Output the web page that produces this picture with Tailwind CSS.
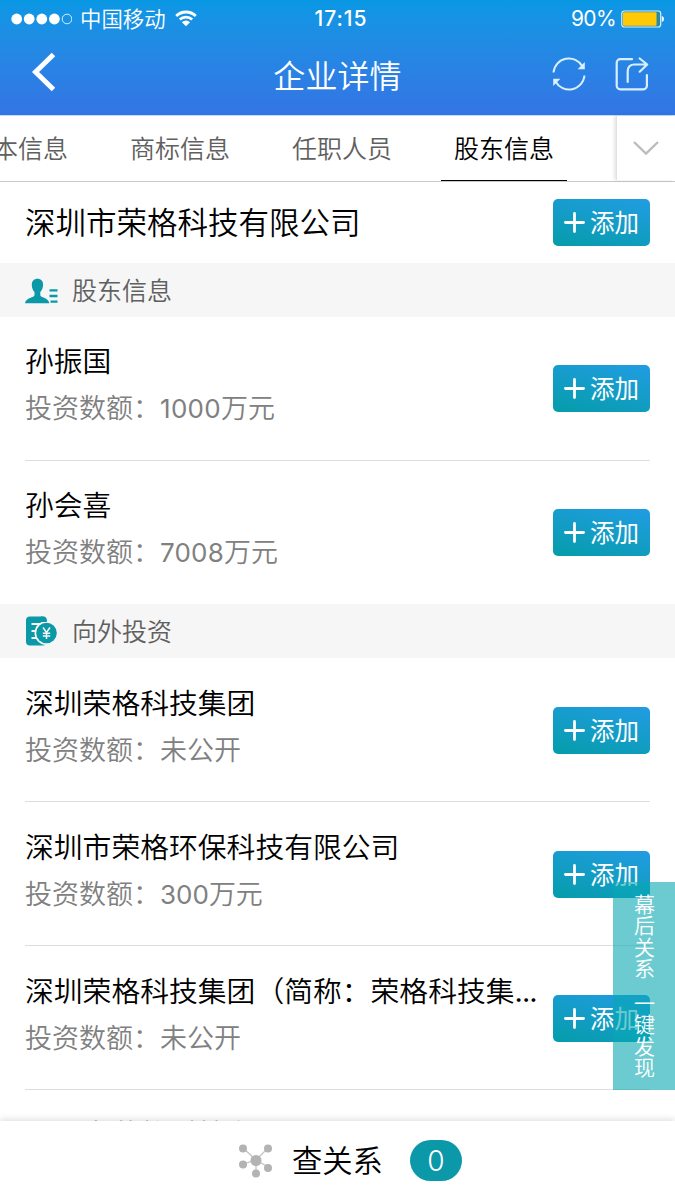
<!DOCTYPE html>
<html lang="zh-CN">
<head>
<meta charset="utf-8">
<title>企业详情</title>
<script src="https://cdn.jsdelivr.net/npm/@tailwindcss/browser@4"></script>
</head>
<body class="bg-white">
<svg class="hidden">
  <symbol id="plus" viewBox="0 0 22 22"><path d="M11 1.500v19M1.500 11h19" stroke="#fff" stroke-width="2.900" stroke-linecap="round"/></symbol>
</svg>
<div class="relative flex h-[1200px] w-[675px] flex-col overflow-hidden bg-white font-['Inter','Noto_Sans_CJK_SC',sans-serif] font-[350] text-black">

  <header class="h-[116px] shrink-0 border-b border-[#b8e2ff] bg-linear-to-b from-[#0898e4] to-[#3374e4] text-white">
    <div class="grid h-[38px] grid-cols-3 items-center pl-[11px] pr-[11px] text-[21px] leading-[38px]">
      <div class="flex items-center">
        <svg class="mr-[8px]" width="61" height="12" viewBox="0 0 61 12"><g fill="#fff"><circle cx="5.700" cy="6" r="5.400"/><circle cx="18.200" cy="6" r="5.400"/><circle cx="30.800" cy="6" r="5.400"/><circle cx="43.400" cy="6" r="5.400"/></g><circle cx="56" cy="6" r="4.800" fill="none" stroke="#d5f0ff"/></svg>
        <span class="text-[21.4px]">中国移动</span>
        <svg class="mb-[2px] ml-[9px]" width="22" height="17" viewBox="0 0 22 17"><path d="M1.200 6A14 14 0 0 1 20.800 6M4.800 9.600a9 9 0 0 1 12.400 0" fill="none" stroke="#fff" stroke-width="2.800"/><path d="M11 16.200 6.900 12.200a5.800 5.800 0 0 1 8.200 0z" fill="#fff"/></svg>
      </div>
      <div class="pl-[7px] text-center text-[21px] font-medium tracking-[1px]">17:15</div>
      <div class="flex items-center justify-end">
        <span class="mr-[5px] text-[21px] font-normal tracking-[-0.6px]">90%</span>
        <svg width="43" height="18" viewBox="0 0 43 18"><rect x=".8" y="1" width="38.900" height="16" rx="2.500" fill="#2b8ba6" stroke="#d5f2ff" stroke-width="1.200"/><rect x="2" y="2.200" width="33.500" height="13.600" rx="1" fill="#ffc907"/><path d="M40.800 6q2.200.6 2.200 3t-2.200 3z" fill="#fff"/></svg>
      </div>
    </div>
    <div class="grid h-[77px] grid-cols-[1fr_auto_1fr] items-center pl-[31px] pr-[26px]">
      <svg class="mb-[9px]" width="26" height="40" viewBox="0 0 26 40"><path d="M22.500 2.500 4.500 20 22.500 37.500" fill="none" stroke="#fff" stroke-width="5"/></svg>
      <h1 class="mr-[5px] text-[32px] leading-[77px] tracking-[0.1px]">企业详情</h1>
      <div class="mb-[5px] flex items-center justify-end gap-[29px] text-[#d8efff]">
        <svg width="34" height="34" viewBox="0 0 34 34" fill="none" stroke="currentColor" stroke-width="2"><path d="M1.500 15.500A15.500 15.500 0 0 1 30.500 9.500M32.500 18.500A15.500 15.500 0 0 1 3.500 24.500"/><path d="M32.800 5v7.200h-7.200zM1.200 29v-7.200h7.200z" fill="currentColor" stroke="none"/></svg>
        <svg width="34" height="34" viewBox="0 0 34 34" fill="none" stroke="currentColor" stroke-width="2.200" stroke-linecap="round" stroke-linejoin="round"><path d="M17 2.200H5.200a3.500 3.500 0 0 0-3.500 3.500v23.100a3.500 3.500 0 0 0 3.500 3.500h23.200a3.500 3.500 0 0 0 3.500-3.500V18"/><path d="M12.700 25V14.500q0-7 7-7H32M24.700 1.500l7.500 6-7.500 7.200"/></svg>
      </div>
    </div>
  </header>

  <nav class="flex h-[66px] shrink-0 border-b border-[#c8c8c8] text-[25px] leading-[66px] text-[#606060]">
    <div class="flex w-[616px] shrink-0 justify-end overflow-visible whitespace-nowrap">
      <span class="mr-[62px]">基本信息</span>
      <span class="mr-[62px]">商标信息</span>
      <span class="mr-[49px]">任职人员</span>
      <span class="mr-[49px] h-[65px] shrink-0 border-b border-black px-[13px] text-black">股东信息</span>
    </div>
    <div class="flex h-[64px] flex-1 items-center justify-center border-l border-[#e2e2e2] shadow-[-2px_0_3px_rgba(0,0,0,0.10)]">
      <svg width="28" height="16" viewBox="0 0 28 16"><path d="M2 2l12 11.500L26 2" fill="none" stroke="#bcbcbc" stroke-width="2.400"/></svg>
    </div>
  </nav>

  <main class="min-h-0 flex-1 overflow-hidden">
    <div class="flex h-[81px] items-center justify-between px-[25px]">
      <h2 class="text-[30.5px] leading-[80px]">深圳市荣格科技有限公司</h2>
      <button class="flex h-[47px] w-[97px] items-center justify-center gap-[5px] rounded-[5px] bg-linear-15 from-[#059ca9] to-[#219ce3] text-[24.5px] font-normal text-white"><svg width="21" height="21"><use href="#plus"/></svg><span class="pt-[2px]">添加</span></button>
    </div>

    <div class="flex h-[54px] items-center bg-[#f6f6f7] pl-[25px] text-[25px] text-[#606060]">
      <svg class="mt-[2px] mr-[14px]" width="33" height="26" viewBox="0 0 33 26" fill="#0b98a7"><path d="M12.500.8c3.700 0 5.600 2.400 5.600 6 0 3.400-1.400 5.700-2.800 7.200v3.200c0 2.400 8.200 2.300 9 8H0c.8-5.700 9.500-5.600 9.500-8V14C8 12.500 6.800 10.200 6.800 6.800c0-3.600 2-6 5.700-6z"/><path d="M24.500 11.200h8v2.400h-8zM24.500 16.800h8v2.400h-8zM25.500 22.400h7v2.400h-7z"/></svg>
      <span class="pt-[2px] leading-[52px]">股东信息</span>
    </div>

    <section class="px-[25px]">
      <article class="flex h-[144px] items-center justify-between border-b border-[#dedede]">
        <div class="pb-[8px]"><h3 class="text-[28.8px] leading-[47px]">孙振国</h3><p class="text-[27px] leading-[47px] text-[#808080]">投资数额：<span class="text-[26px] font-normal tracking-[0.3px]">1000</span>万元</p></div>
        <button class="flex h-[47px] w-[97px] items-center justify-center gap-[5px] rounded-[5px] bg-linear-15 from-[#059ca9] to-[#219ce3] text-[24.5px] font-normal text-white"><svg width="21" height="21"><use href="#plus"/></svg><span class="pt-[2px]">添加</span></button>
      </article>
      <article class="flex h-[143px] items-center justify-between">
        <div class="pb-[8px]"><h3 class="text-[28.8px] leading-[47px]">孙会喜</h3><p class="text-[27px] leading-[47px] text-[#808080]">投资数额：<span class="text-[26px] font-normal tracking-[0.2px]">7008</span>万元</p></div>
        <button class="flex h-[47px] w-[97px] items-center justify-center gap-[5px] rounded-[5px] bg-linear-15 from-[#059ca9] to-[#219ce3] text-[24.5px] font-normal text-white"><svg width="21" height="21"><use href="#plus"/></svg><span class="pt-[2px]">添加</span></button>
      </article>
    </section>

    <div class="flex h-[54px] items-center bg-[#f6f6f7] pl-[26px] text-[25px] text-[#606060]">
      <svg class="mr-[15px]" width="31" height="30" viewBox="0 0 31 30"><path d="M4 .5h12.500q4.300 0 4.300 4.300v20.400q0 4.300-4.300 4.300H4Q0 29.500 0 25.500v-21Q0 .5 4 .5z" fill="#0b98a7"/><path d="M5.500 8h9M5.500 15h5M5.500 22h8" stroke="#f6f6f7" stroke-width="2"/><circle cx="20.500" cy="17" r="12" fill="#f6f6f7"/><path d="M16.500 .5q4.300 0 4.300 4.300V6h-6V.5z" fill="#0b98a7"/><circle cx="20.500" cy="17" r="10.300" fill="#0b98a7"/><path d="M17 11.500l3.500 5 3.500-5M20.500 16.500v6.500M16.800 17.200h7.400M16.800 20h7.400" fill="none" stroke="#f6f6f7" stroke-width="1.500"/></svg>
      <span class="pt-[2px] leading-[52px]">向外投资</span>
    </div>

    <section class="px-[25px]">
      <article class="flex h-[144px] items-center justify-between border-b border-[#dedede]">
        <div class="pb-[5px]"><h3 class="text-[28.8px] leading-[47px]">深圳荣格科技集团</h3><p class="text-[27px] leading-[47px] text-[#808080]">投资数额：未公开</p></div>
        <button class="mt-[2px] flex h-[47px] w-[97px] items-center justify-center gap-[5px] rounded-[5px] bg-linear-15 from-[#059ca9] to-[#219ce3] text-[24.5px] font-normal text-white"><svg width="21" height="21"><use href="#plus"/></svg><span class="pt-[2px]">添加</span></button>
      </article>
      <article class="flex h-[144px] items-center justify-between border-b border-[#dedede]">
        <div class="pb-[5px]"><h3 class="text-[28.8px] leading-[47px]">深圳市荣格环保科技有限公司</h3><p class="text-[27px] leading-[47px] text-[#808080]">投资数额：<span class="text-[26px] font-normal">300</span>万元</p></div>
        <button class="mt-[2px] flex h-[47px] w-[97px] items-center justify-center gap-[5px] rounded-[5px] bg-linear-15 from-[#059ca9] to-[#219ce3] text-[24.5px] font-normal text-white"><svg width="21" height="21"><use href="#plus"/></svg><span class="pt-[2px]">添加</span></button>
      </article>
      <article class="flex h-[144px] items-center justify-between border-b border-[#dedede]">
        <div class="pb-[5px] whitespace-nowrap"><h3 class="text-[28.8px] leading-[47px]">深圳荣格科技集团（简称：荣格科技集<span class="tracking-[-0.9px] font-normal">...</span></h3><p class="text-[27px] leading-[47px] text-[#808080]">投资数额：未公开</p></div>
        <button class="mt-[2px] flex h-[47px] w-[97px] shrink-0 items-center justify-center gap-[5px] rounded-[5px] bg-linear-15 from-[#059ca9] to-[#219ce3] text-[24.5px] font-normal text-white"><svg width="21" height="21"><use href="#plus"/></svg><span class="pt-[2px]">添加</span></button>
      </article>
      <article class="h-[144px] pt-[21px]">
        <h3 class="text-[28.8px] leading-[47px]">深圳市荣格科技有限公司</h3>
      </article>
    </section>
  </main>

  <aside class="absolute top-[882px] right-0 flex h-[208px] w-[62px] flex-col items-center bg-[#08a8b2]/60 pt-[12px] pl-px text-[21px] leading-[21.3px] text-white">
    <span>幕</span><span>后</span><span>关</span><span class="mb-[14px]">系</span><span>一</span><span>键</span><span>发</span><span>现</span>
  </aside>

  <footer class="relative flex h-[79px] shrink-0 items-center bg-white pl-[238px] shadow-[0_-2px_6px_rgba(0,0,0,0.12)]">
    <svg width="35" height="35" viewBox="0 0 35 35" fill="#b3b3b3"><path d="M5 5l13 12L30 5M5 21l13-4 12 7M18 17v13" fill="none" stroke="#c4c4c4" stroke-width="1.300"/><circle cx="18" cy="17.500" r="5.500"/><circle cx="5" cy="5.500" r="4"/><circle cx="30" cy="5.500" r="4"/><circle cx="5" cy="21.500" r="4"/><circle cx="30" cy="25" r="4"/><circle cx="18" cy="30.500" r="4"/></svg>
    <span class="ml-[19px] pt-[2px] text-[30.3px] leading-[77px]">查关系</span>
    <span class="ml-[27px] flex h-[41px] w-[52px] items-center justify-center rounded-full bg-[#0b98a9] text-[28px] text-white">0</span>
  </footer>
</div>
</body>
</html>
